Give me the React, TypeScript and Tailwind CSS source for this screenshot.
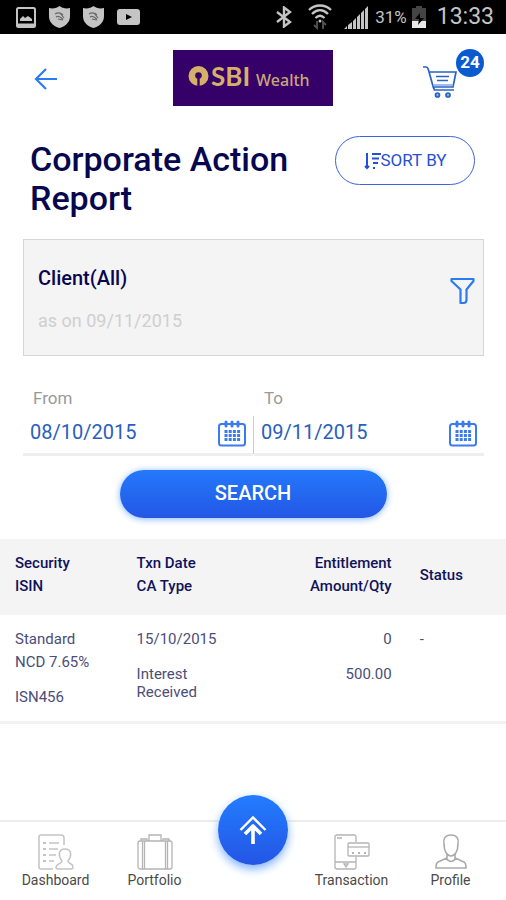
import React from "react";

function StatusBar() {
  return (
    <div className="flex h-[34px] items-center justify-between bg-black pr-3 pl-4 text-[#c4c4c4]">
      <div className="flex items-center gap-[13px]">
        <svg width="20" height="21" viewBox="0 0 20 21" aria-hidden="true">
          <rect x="1" y="1" width="18" height="19" rx="1.5" fill="none" stroke="currentColor" strokeWidth="2" />
          <path d="M4 14v-2l3-3 2 2 3-2 4 3v2z" fill="currentColor" />
          <path d="M1 18h18" stroke="currentColor" strokeWidth="3" />
        </svg>
        <Shield />
        <Shield />
        <svg width="23" height="16" viewBox="0 0 23 16" aria-hidden="true">
          <rect width="23" height="16" rx="3" fill="currentColor" />
          <path d="M9 5l6 3-6 3z" fill="#000" />
        </svg>
      </div>
      <div className="flex items-center">
        <svg className="mr-4" width="16" height="22" viewBox="0 0 16 22" fill="none" stroke="currentColor" strokeWidth="2.4" aria-hidden="true">
          <path d="M1 6l13 10-6 4.500v-19L14 6 1 16" />
        </svg>
        <svg className="mr-3" width="24" height="26" viewBox="0 0 24 26" fill="none" stroke="currentColor" strokeWidth="2.3" aria-hidden="true">
          <path d="M1 6c6-6 16-6 22 0M4 10c5-5 11-5 16 0M7.500 14c3-3 6-3 9 0" />
          <circle cx="12" cy="17" r="1.500" fill="currentColor" stroke="none" />
          <path d="M9 17v7l-3-3M15 25v-7l3 3" stroke="#555" strokeWidth="1.800" />
        </svg>
        <svg className="mr-[7px]" width="24" height="24" viewBox="0 0 24 24" fill="currentColor" aria-hidden="true">
          <path d="M0 24l3-3v3zM4 20l4-3v7H4z" />
          <path d="M9 16l3-3v11H9zM13 12l3-3v15h-3zM17 8l3-3v19h-3zM21 4l3-3v23h-3z" />
        </svg>
        <span className="text-[17px] leading-6">31%</span>
        <svg className="mr-[10px] ml-1" width="16" height="22" viewBox="0 0 16 22" aria-hidden="true">
          <path d="M5 0h6v2h4v13H1V2h4z" fill="#444" />
          <path d="M1 15h14v7H1z" fill="#e8e8e8" />
          <path d="M9 7l-5 6h4l-1 6 6-7H9z" fill="#000" />
        </svg>
        <span className="text-[23px] leading-8">13:33</span>
      </div>
    </div>
  );
}

function Shield() {
  return (
    <svg width="21" height="22" viewBox="0 0 21 22" aria-hidden="true">
      <path d="M10.500 0C8 2 4 3 0 2v8c0 6 4 10 10.500 12C17 20 21 16 21 10V2c-4 1-8 0-10.500-2z" fill="currentColor" />
      <path d="M6 8c3-2 6-1 8 1M7 11c3-2 5 1 7 2M11 7l4 5M9 13l5 1" fill="none" stroke="#666" strokeWidth="1.200" />
    </svg>
  );
}

function Cart() {
  return (
    <svg width="36" height="34" viewBox="0 0 36 34" fill="none" stroke="#2a62c4" strokeWidth="1.700" aria-hidden="true">
      <path d="M0 2h3c1 0 2 1 2.500 3l5 18 1 2H31" />
      <path d="M6.500 7H33l-3 15H10.500" />
      <path d="M13 11.500h13M14 15.500h11" strokeWidth="1.500" />
      <path d="M10 20h20" stroke="#8fb0e8" />
      <circle cx="14.500" cy="30" r="2" fill="#8fb0e8" />
      <circle cx="25" cy="30" r="2" fill="#8fb0e8" />
    </svg>
  );
}

function Header() {
  return (
    <header className="grid grid-cols-[1fr_160px_1fr] items-start px-5 pt-4">
      <button type="button" aria-label="Back" className="mt-[17px] ml-[14px] w-6">
        <svg width="24" height="24" viewBox="0 0 24 24" fill="none" stroke="#2b7bf5" strokeWidth="2.200" aria-hidden="true">
          <path d="M23 12H2M12 2L2 12l10 10" />
        </svg>
      </button>
      <div className="flex h-14 items-center bg-[#350067] pl-[15px] text-[#d4b06a]">
        <svg className="mb-1" width="21" height="22" viewBox="0 0 21 22" aria-hidden="true">
          <circle cx="10.500" cy="11" r="10" fill="currentColor" />
          <circle cx="10.500" cy="10.500" r="3.300" fill="#350067" />
          <path d="M9.300 11h2.400v11H9.300z" fill="#350067" />
        </svg>
        <span className="mb-1 ml-[2px] font-[Lato] text-[26px] leading-8 font-bold">SBI</span>
        <span className="mt-1 ml-[6px] font-['Noto_Sans'] text-base leading-6 font-medium text-[#c9a67c]">Wealth</span>
      </div>
      <button type="button" aria-label="Cart, 24 items" className="relative mt-[15px] mr-[27px] w-9 justify-self-end">
        <Cart />
        <span className="absolute -top-4 left-[33px] flex h-7 w-7 items-center justify-center rounded-full bg-[#0a5bd0] text-[17px] font-bold text-white">24</span>
      </button>
    </header>
  );
}

function CalendarIcon() {
  return (
    <svg className="shrink-0" width="28" height="27" viewBox="0 0 28 27" fill="none" stroke="#3c7af0" aria-hidden="true">
      <rect x="1" y="4" width="26" height="21.500" rx="2.500" strokeWidth="2" />
      <path d="M8 2v4M14 2v4M20 2v4" strokeWidth="3" strokeLinecap="round" />
      <path d="M6.500 11.500h16M6.500 15.500h16M6.500 19.500h16" strokeWidth="3" strokeDasharray="3 1.200" />
    </svg>
  );
}

function DateField({ id, label, value }: { id: string; label: string; value: string }) {
  return (
    <div className="min-w-0 flex-1">
      <label htmlFor={id} className="block pl-[10px] text-[17px] leading-6 text-[#999]">{label}</label>
      <div className="mt-1 flex h-[42px] items-center border-b-3 border-[#eee] pr-[7px]">
        <input id={id} defaultValue={value} className="mb-1 w-full min-w-0 bg-transparent pl-[7px] text-xl leading-6 text-[#2860bd] outline-none" />
        <button type="button" aria-label={`Choose ${label} date`}>
          <CalendarIcon />
        </button>
      </div>
    </div>
  );
}

function DashboardIcon() {
  return (
    <svg width="36" height="36" viewBox="0 0 36 36" fill="none" stroke="#c4c4c4" strokeWidth="1.500" aria-hidden="true">
      <path d="M15 35H3q-2 0-2-2V3q0-2 2-2h20q3 0 3 3v7" />
      <path d="M11 9h10M11 15h9M11 21h7M11 27h5" />
      <path d="M5 9h3M5 15h3M5 21h3M5 27h3" strokeWidth="2" />
      <path d="M24 27c-4-5-4-12 3-12s7 7 3 12c0 3 5 2 5 6 0 2-1 2-2 2H20c-2 0-2-1-2-2 1-4 6-3 6-6z" />
    </svg>
  );
}

function PortfolioIcon() {
  return (
    <svg width="36" height="36" viewBox="0 0 36 36" fill="none" stroke="#b4b4b4" strokeWidth="1.300" aria-hidden="true">
      <rect x="1" y="7" width="34" height="28" rx="2" />
      <path d="M5.500 7v28M7.500 7v28M28.500 7v28M30.500 7v28M12 7V1h12v6M4 7V5h6v2M26 7V5h6v2" />
    </svg>
  );
}

function TransactionIcon() {
  return (
    <svg width="36" height="36" viewBox="0 0 36 36" fill="none" stroke="#b4b4b4" strokeWidth="1.300" aria-hidden="true">
      <path d="M22 8V3q0-2-2-2H3Q1 1 1 3v30q0 2 2 2h17q2 0 2-2V23M1 28h21M3 4h5" />
      <path d="M10 30h4l-2 3z" />
      <rect x="14" y="9" width="21" height="13" rx="1" />
      <path d="M14 13h21" />
      <path d="M18 19h2M24 19h2M30 19h2" strokeWidth="1.800" />
    </svg>
  );
}

function ProfileIcon() {
  return (
    <svg width="32" height="36" viewBox="0 0 32 36" fill="none" stroke="#aaa" strokeWidth="1.600" aria-hidden="true">
      <path d="M16 1c-6 0-8 4-7 9 0 7 3 12 7 12s7-5 7-12c1-5-1-9-7-9z" />
      <path d="M12 20v4L3 28q-2 1-2 6h30q0-5-2-6l-9-4v-4M11 24q5 7 10 0" />
    </svg>
  );
}

function Tab({ label, children }: { label: string; children: React.ReactNode }) {
  return (
    <a href="#" className="flex w-[99px] flex-col items-center">
      {children}
      <span className="mt-[2px] text-sm leading-4 text-[#4a4a4a]">{label}</span>
    </a>
  );
}

export default function App() {
  return (
    <div className="flex min-h-screen flex-col bg-white font-[Roboto,sans-serif]">
      <StatusBar />
      <Header />
      <main className="flex-1">
        <div className="flex items-start justify-between pt-[30px] pr-[31px] pl-[30px]">
          <h1 className="w-[280px] pt-1 text-[34px] leading-[39px] font-medium text-[#06074f]">Corporate Action Report</h1>
          <button type="button" className="flex h-[49px] w-[140px] shrink-0 items-center justify-center rounded-full border border-[#3c63dd] text-[17px] text-[#2450d5]">
            <svg width="17" height="18" viewBox="0 0 17 18" fill="none" stroke="currentColor" strokeWidth="2" aria-hidden="true">
              <path d="M3 1v15M1 14l2 2 2-2M8 2h9M8 6.500h7M9 11h5" />
              <path d="M9 16h2" />
            </svg>
            SORT BY
          </button>
        </div>
        <section className="mr-[22px] ml-[23px] mt-[21px] flex h-[117px] items-center justify-between border border-[#d6d6d6] bg-[#f4f4f4] pr-2 pl-[14px]">
          <div className="pt-1">
            <h2 className="text-xl leading-6 font-medium text-[#06074f]">Client(All)</h2>
            <p className="mt-[19px] text-lg leading-6 text-[#cfcfcf]">as on 09/11/2015</p>
          </div>
          <button type="button" aria-label="Filter" className="mb-[14px]">
            <svg width="25" height="28" viewBox="0 0 25 28" fill="none" stroke="#2b7bf5" strokeWidth="2.200" strokeLinejoin="round" aria-hidden="true">
              <path d="M1.500 2h22v2l-7 8.500V23q0 3-3 3h-3V12.500L1.500 4z" />
            </svg>
          </button>
        </section>
        <form onSubmit={(e) => e.preventDefault()}>
          <div className="mr-[22px] ml-[23px] mt-[30px] flex">
            <DateField id="from" label="From" value="08/10/2015" />
            <div className="mt-[30px] mb-[2px] w-px bg-[#ccc]" />
            <DateField id="to" label="To" value="09/11/2015" />
          </div>
          <button type="submit" className="mx-auto mt-[14px] flex h-12 w-[267px] items-center justify-center rounded-full bg-linear-to-b from-[#2478fb] to-[#2357e5] pb-[3px] text-xl font-medium text-white shadow-[0_1px_7px_#80b5ff]">SEARCH</button>
        </form>
        <table className="mt-[21px] w-full table-fixed text-[15px] text-[#4c4d79]">
          <colgroup>
            <col className="w-[27%]" />
            <col className="w-[25%]" />
            <col className="w-[25.400%]" />
            <col className="w-[22.600%]" />
          </colgroup>
          <thead className="h-[76px] bg-[#f4f4f4] text-left leading-[23px] text-[#11125c]">
            <tr>
              <th className="pb-1 pl-[15px] font-medium">Security<br />ISIN</th>
              <th className="pb-1 font-medium">Txn Date<br />CA Type</th>
              <th className="pb-1 text-right font-medium">Entitlement<br />Amount/Qty</th>
              <th className="pb-1 pl-[28px] font-medium">Status</th>
            </tr>
          </thead>
          <tbody>
            <tr className="h-[107px] border-b-3 border-[#f2f2f2] align-top">
              <td className="pt-[13px] pl-[15px]">
                <p className="leading-[23px]">Standard<br />NCD 7.65%</p>
                <p className="mt-3 leading-[23px]">ISN456</p>
              </td>
              <td className="pt-[13px]">
                <p className="leading-[23px]">15/10/2015</p>
                <p className="mt-[14px] leading-[18px]">Interest<br />Received</p>
              </td>
              <td className="pt-[13px] text-right">
                <p className="leading-[23px]">0</p>
                <p className="mt-3 leading-[23px]">500.00</p>
              </td>
              <td className="pt-[13px] pl-[28px] leading-[23px]">-</td>
            </tr>
          </tbody>
        </table>
      </main>
      <nav className="relative flex h-20 justify-between border-t-2 border-[#ececec] px-[6px] pt-3">
        <div className="flex">
          <Tab label="Dashboard"><DashboardIcon /></Tab>
          <Tab label="Portfolio"><PortfolioIcon /></Tab>
        </div>
        <button type="button" aria-label="Home" className="absolute -top-[27px] left-1/2 flex h-[70px] w-[70px] -translate-x-1/2 items-center justify-center rounded-full bg-linear-to-b from-[#237cff] to-[#2455e5] shadow-[0_4px_10px_#7eb2ff]">
          <svg width="28" height="30" viewBox="0 0 28 30" fill="none" stroke="#fff" aria-hidden="true">
            <path d="M1.500 15L14 2.500 26.500 15" strokeWidth="2.400" />
            <path d="M6 19l8-8 8 8M14 11v18" strokeWidth="3.600" strokeLinejoin="round" />
          </svg>
        </button>
        <div className="flex">
          <Tab label="Transaction"><TransactionIcon /></Tab>
          <Tab label="Profile"><ProfileIcon /></Tab>
        </div>
      </nav>
    </div>
  );
}
